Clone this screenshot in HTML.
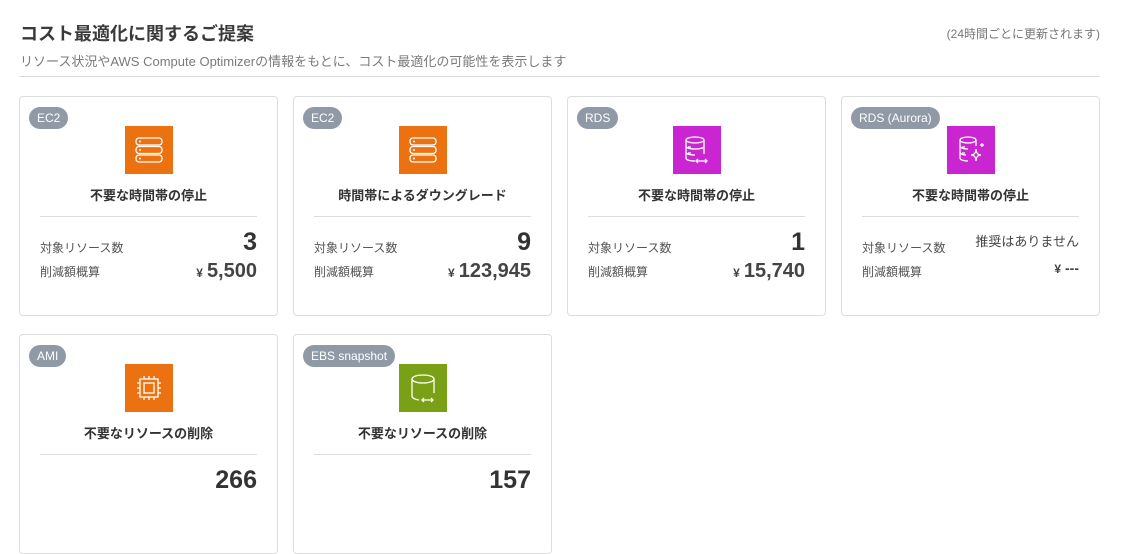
<!DOCTYPE html>
<html><head><meta charset="utf-8"><style>
*{margin:0;padding:0;box-sizing:border-box}
body{width:1123px;height:475px;overflow:hidden;background:#fff;font-family:"Liberation Sans","Noto Sans CJK JP",sans-serif;color:#333;position:relative}
.h{position:absolute;left:20px;top:20px;font-size:18px;font-weight:bold;color:#3a3a3a}
.sub{position:absolute;left:20px;top:51px;font-size:13px;color:#7a7a7a}
.note{position:absolute;right:23px;top:25px;font-size:12px;color:#777}
.hr{position:absolute;left:19px;top:76px;width:1081px;height:1px;background:#ddd}
.card{position:absolute;width:259px;height:220px;border:1px solid #ddd;border-radius:4px;background:#fff}
.badge{position:absolute;left:9px;top:10px;height:22px;line-height:22px;padding:0 8px;border-radius:11px;background:#909aa6;color:#fff;font-size:12px}
.ic{position:absolute;left:105px;top:29px;width:48px;height:48px}
.ttl{position:absolute;left:0;right:0;top:88px;text-align:center;font-size:13px;font-weight:bold;color:#333}
.dv{position:absolute;left:20px;right:20px;top:119px;height:1px;background:#ddd}
.l1,.l2{position:absolute;left:20px;font-size:12px;color:#555}
.l1{top:142px}.l2{top:166px}
.v1{position:absolute;right:20px;top:131px;font-size:25px;font-weight:bold;color:#333}
.v2{position:absolute;right:20px;top:163px;font-size:20px;font-weight:bold;color:#444}
.v2 small{font-size:12px;margin-right:4px}
.t1{position:absolute;right:20px;top:134px;font-size:13px;color:#444}
</style></head><body>
<div class="h">コスト最適化に関するご提案</div>
<div class="sub">リソース状況やAWS Compute Optimizerの情報をもとに、コスト最適化の可能性を表示します</div>
<div class="note">(24時間ごとに更新されます)</div>
<div class="hr"></div>

<div class="card" style="left:19px;top:96px"><div class="badge">EC2</div>
<svg class="ic" viewBox="0 0 48 48"><rect width="48" height="48" fill="#ec7211"/><g fill="none" stroke="#fff" stroke-width="1.3"><rect x="11" y="12" width="26" height="7" rx="3"/><rect x="11" y="20.5" width="26" height="7" rx="3"/><rect x="11" y="29" width="26" height="7" rx="3"/></g><g fill="#fff"><circle cx="15" cy="15.5" r="1"/><circle cx="15" cy="24" r="1"/><circle cx="15" cy="32.5" r="1"/></g></svg>
<div class="ttl">不要な時間帯の停止</div><div class="dv"></div>
<div class="l1">対象リソース数</div><div class="v1">3</div>
<div class="l2">削減額概算</div><div class="v2"><small>¥</small>5,500</div></div>

<div class="card" style="left:293px;top:96px"><div class="badge">EC2</div>
<svg class="ic" viewBox="0 0 48 48"><rect width="48" height="48" fill="#ec7211"/><g fill="none" stroke="#fff" stroke-width="1.3"><rect x="11" y="12" width="26" height="7" rx="3"/><rect x="11" y="20.5" width="26" height="7" rx="3"/><rect x="11" y="29" width="26" height="7" rx="3"/></g><g fill="#fff"><circle cx="15" cy="15.5" r="1"/><circle cx="15" cy="24" r="1"/><circle cx="15" cy="32.5" r="1"/></g></svg>
<div class="ttl">時間帯によるダウングレード</div><div class="dv"></div>
<div class="l1">対象リソース数</div><div class="v1">9</div>
<div class="l2">削減額概算</div><div class="v2"><small>¥</small>123,945</div></div>

<div class="card" style="left:567px;top:96px"><div class="badge">RDS</div>
<svg class="ic" viewBox="0 0 48 48"><rect width="48" height="48" fill="#c925d1"/><g fill="none" stroke="#fff" stroke-width="1.3"><ellipse cx="22" cy="14" rx="9" ry="3"/><path d="M13 14v18c0 2 4 3 9 3M31 14v14M15 21h3M15 27h3M23 35h11M25 33l-2 2 2 2M32 33l2 2-2 2"/><path d="M13 20c0 2 4 3 9 3s9-1 9-3M13 26c0 2 4 3 9 3"/></g></svg>
<div class="ttl">不要な時間帯の停止</div><div class="dv"></div>
<div class="l1">対象リソース数</div><div class="v1">1</div>
<div class="l2">削減額概算</div><div class="v2"><small>¥</small>15,740</div></div>

<div class="card" style="left:841px;top:96px"><div class="badge">RDS (Aurora)</div>
<svg class="ic" viewBox="0 0 48 48"><rect width="48" height="48" fill="#c925d1"/><g fill="none" stroke="#fff" stroke-width="1.3"><ellipse cx="21" cy="14" rx="8" ry="3"/><path d="M13 14v18c0 2 4 3 8 3M29 14v6M15 21h3M15 27h3"/><path d="M13 20c0 2 4 3 8 3M13 26c0 2 3 3 6 3"/><path d="M29 23c0 4 2 6 5 6c-3 0-5 2-5 6c0-4-2-6-5-6c3 0 5-2 5-6z"/><path d="M35 17v4M33 19h4"/></g></svg>
<div class="ttl">不要な時間帯の停止</div><div class="dv"></div>
<div class="l1">対象リソース数</div><div class="t1">推奨はありません</div>
<div class="l2">削減額概算</div><div class="v2" style="font-size:14px;top:163px"><small>¥</small>---</div></div>

<div class="card" style="left:19px;top:334px"><div class="badge">AMI</div>
<svg class="ic" viewBox="0 0 48 48"><rect width="48" height="48" fill="#ec7211"/><g fill="none" stroke="#fff" stroke-width="1.3"><rect x="15" y="15" width="18" height="18"/><rect x="19" y="19" width="10" height="10"/><path d="M19 15v-3M24 15v-3M29 15v-3M19 33v3M24 33v3M29 33v3M15 19h-3M15 24h-3M15 29h-3M33 19h3M33 24h3M33 29h3"/></g></svg>
<div class="ttl">不要なリソースの削除</div><div class="dv"></div>
<div class="v1">266</div></div>

<div class="card" style="left:293px;top:334px"><div class="badge">EBS snapshot</div>
<svg class="ic" viewBox="0 0 48 48"><rect width="48" height="48" fill="#7aa116"/><g fill="none" stroke="#fff" stroke-width="1.3"><ellipse cx="24" cy="15" rx="11" ry="4"/><path d="M13 15v17c0 2 3 3.5 7 4M35 15v14M23 36h11M25 34l-2 2 2 2M32 34l2 2-2 2"/></g></svg>
<div class="ttl">不要なリソースの削除</div><div class="dv"></div>
<div class="v1">157</div></div>
</body></html>
